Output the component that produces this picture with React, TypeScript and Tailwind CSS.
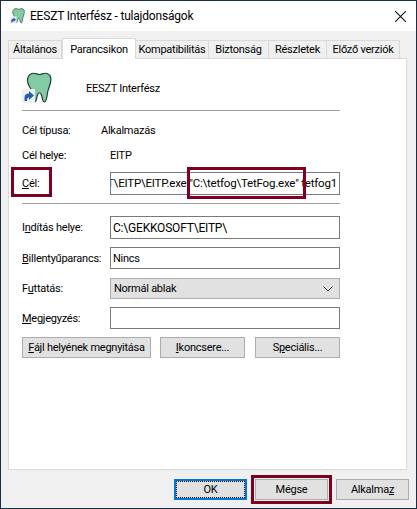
import React from "react";

const fieldInput = "h-full flex-1 min-w-0 border border-[#7a7a7a] bg-white px-[2px] flex items-center overflow-hidden whitespace-nowrap";
const winButton = "h-[21px] flex items-center justify-center whitespace-nowrap border border-[#adadad] bg-[#e1e1e1] text-black";

function ToothIcon({ className }: { className: string }) {
  return (
    <svg viewBox="0 0 30 32" className={className}>
      <path
        d="M10 1.5C13 0.5 15 2.5 17.5 2.5C20 2.5 22 0.5 25 1.5C28 2.5 29.5 6 28.5 10.5C27.5 15 26 17 25.5 21C25 25 24.5 29.5 22.5 30C20.5 30 20.5 26 19.5 23C18.5 20 16.5 20 15.5 23C14.5 26 14.5 30 12.5 30C10.5 29.5 10.5 24 9.5 19C8.5 15 5.5 13 5.5 8.5C5.5 4.5 7 2.5 10 1.5Z"
        fill="#83cba4"
        stroke="#1f3d30"
        strokeWidth="1.2"
      />
      <rect x="0" y="17" width="13" height="14" fill="#eef1f3" />
      <path d="M2.5 29L2.5 25.5C2.5 22.5 4.5 21.5 7 21.5L7 19L12 23.5L7 28L7 25.5C5.5 25.5 5 26.5 5 29Z" fill="#2a5da8" />
    </svg>
  );
}

function Tab({ label, width, active }: { label: string; width: string; active?: boolean }) {
  if (active) {
    return (
      <div className={`${width} relative z-10 h-[21px] flex items-center justify-center border border-b-0 border-[#d9d9d9] bg-white`}>
        {label}
      </div>
    );
  }
  return (
    <div className={`${width} h-[19px] flex items-center justify-center whitespace-nowrap border border-l-0 border-[#d9d9d9] bg-[#f0f0f0]`}>
      {label}
    </div>
  );
}

function Row({ label, height, mt, children }: { label: React.ReactNode; height: string; mt: string; children: React.ReactNode }) {
  return (
    <div className={`${height} ${mt} flex items-center`}>
      <div className="w-[88px] shrink-0 whitespace-nowrap">{label}</div>
      {children}
    </div>
  );
}

export default function App() {
  return (
    <div
      className="w-[417px] h-[509px] border border-[#1b2d47] bg-[#f0f0f0] text-[11px] leading-none tracking-[-0.25px] text-black flex flex-col overflow-hidden"
      style={{ fontFamily: "Roboto, sans-serif" }}
    >
      {/* title bar */}
      <div className="h-[30px] shrink-0 bg-white flex items-center pl-[9px] pr-[10px]">
        <ToothIcon className="w-[15px] h-[16px] mr-[5px]" />
        <span className="flex-1 text-[12px] tracking-[-0.2px]">EESZT Interfész - tulajdonságok</span>
        <svg viewBox="0 0 10 10" className="w-[11px] h-[11px]">
          <path d="M0 0L10 10M10 0L0 10" stroke="#111" strokeWidth="1" fill="none" />
        </svg>
      </div>

      {/* tabs */}
      <div className="mt-[7px] ml-[7px] h-[21px] flex items-end shrink-0">
        <div className="w-[54px] h-[19px] flex items-center justify-center border border-[#d9d9d9] bg-[#f0f0f0]">Általános</div>
        <Tab label="Parancsikon" width="w-[74px]" active />
        <Tab label="Kompatibilitás" width="w-[73px]" />
        <Tab label="Biztonság" width="w-[60px]" />
        <Tab label="Részletek" width="w-[58px]" />
        <Tab label="Előző verziók" width="w-[73px]" />
      </div>

      {/* panel */}
      <div className="-mt-px ml-[7px] mr-[9px] h-[412px] shrink-0 border border-[#d9d9d9] bg-white pl-[13px] pr-[66px]">
        <div className="mt-[14px] h-[30px] flex items-center">
          <ToothIcon className="w-[30px] h-[32px] shrink-0" />
          <span className="ml-[34px]">EESZT Interfész</span>
        </div>
        <div className="mt-[7px] h-px bg-[#a0a0a0]" />

        <div className="mt-[11px] h-[16px] flex items-center">
          <div className="w-[79px]">Cél típusa:</div>
          <div>Alkalmazás</div>
        </div>
        <Row label="Cél helye:" height="h-[16px]" mt="mt-[9px]">
          <div>EITP</div>
        </Row>

        <div className="relative">
          <Row label={<><span className="underline">C</span>él:</>} height="h-[23px]" mt="mt-[9px]">
            <div className={`${fieldInput} justify-end text-[11.5px] tracking-[-0.2px]`}>
              <span>C:\GEKKOSOFT\EITP\EITP.exe "C:\tetfog\TetFog.exe" tetfog1</span>
            </div>
          </Row>
          <div className="absolute left-[-11px] top-[-5px] w-[41px] h-[30px] border-[3px] border-[#7d0020]" />
          <div className="absolute left-[165px] top-[-5px] w-[119px] h-[32px] border-[3px] border-[#7d0020]" />
        </div>

        <div className="mt-[8px] h-px bg-[#a0a0a0]" />

        <Row label={<>I<span className="underline">n</span>dítás helye:</>} height="h-[23px]" mt="mt-[12px]">
          <div className={`${fieldInput} text-[12px] tracking-[-0.2px]`}>C:\GEKKOSOFT\EITP\</div>
        </Row>
        <Row label={<><span className="underline">B</span>illentyűparancs:</>} height="h-[22px]" mt="mt-[8px]">
          <div className={fieldInput}>Nincs</div>
        </Row>
        <Row label={<>F<span className="underline">u</span>ttatás:</>} height="h-[21px]" mt="mt-[9px]">
          <div className="h-full flex-1 border border-[#adadad] bg-[#e1e1e1] pl-[3px] pr-[6px] flex items-center justify-between">
            <span>Normál ablak</span>
            <svg viewBox="0 0 10 6" className="w-[10px] h-[6px]">
              <path d="M0.5 0.5L5 5L9.5 0.5" stroke="#333" strokeWidth="1" fill="none" />
            </svg>
          </div>
        </Row>
        <Row label={<><span className="underline">M</span>egjegyzés:</>} height="h-[22px]" mt="mt-[8px]">
          <div className={fieldInput} />
        </Row>

        <div className="mt-[8px] flex">
          <div className={`${winButton} w-[129px]`}><span><span className="underline">F</span>ájl helyének megnyitása</span></div>
          <div className={`${winButton} w-[85px] ml-[9px]`}><span><span className="underline">I</span>koncsere...</span></div>
          <div className={`${winButton} w-[85px] ml-[10px]`}><span>S<span className="underline">p</span>eciális...</span></div>
        </div>
      </div>

      {/* footer */}
      <div className="mt-[9px] mr-[7px] flex justify-end gap-[8px]">
        <div className="w-[73px] h-[21px] flex items-center justify-center border-2 border-[#0078d7] bg-[#e1e1e1]">
          <div className="w-full h-full flex items-center justify-center border border-dotted border-black">OK</div>
        </div>
        <div className={`${winButton} w-[73px] outline-[3px] outline-offset-[1px] outline-[#7d0020]`}>Mégse</div>
        <div className={`${winButton} w-[73px]`}><span>Alkalma<span className="underline">z</span></span></div>
      </div>
    </div>
  );
}
